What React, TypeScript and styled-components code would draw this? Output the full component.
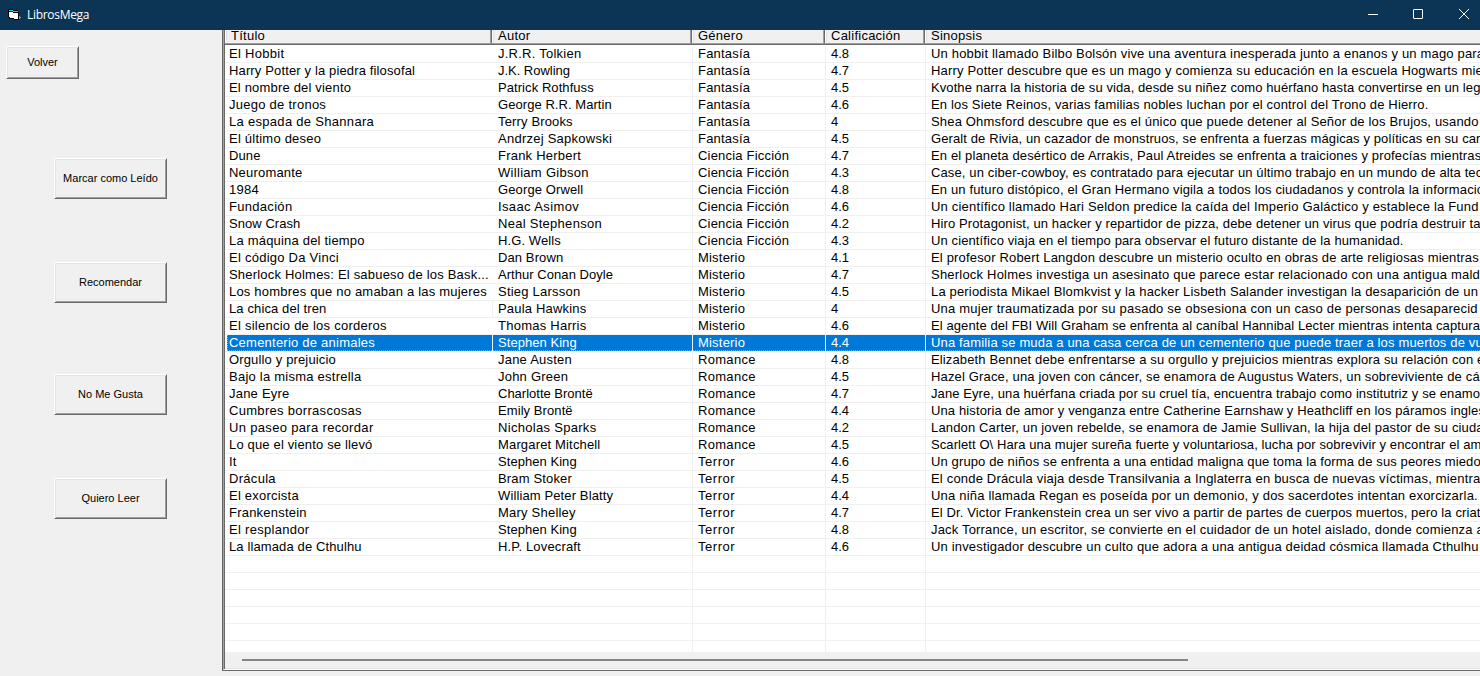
import React from "react";
import styled, { createGlobalStyle, css } from "styled-components";

const Global = createGlobalStyle`
  * { box-sizing: border-box; }
  body { margin: 0; background: #f0f0f0; overflow: hidden; }
`;

const Window = styled.div`
  display: flex;
  flex-direction: column;
  width: 1480px;
  height: 676px;
  overflow: hidden;
  background: #f0f0f0;
  color: #000;
  font-family: "Liberation Sans", Arial, sans-serif;
`;

const TitleBar = styled.header`
  display: flex;
  align-items: center;
  flex: 0 0 30px;
  padding-left: 7px;
  background: #0c3454;
  color: #fff;
`;

const AppTitle = styled.h1`
  flex: 1;
  margin: 0 0 0 5px;
  font: 400 12px/16px "Open Sans", "Noto Sans", sans-serif;
  letter-spacing: -0.3px;
`;

const WindowControls = styled.div`
  display: flex;
`;

const ControlButton = styled.button`
  display: flex;
  align-items: center;
  justify-content: center;
  width: 46px;
  height: 30px;
  padding: 0 0 2px;
  border: 0;
  background: none;
  &:first-child { width: 44px; }
  &:last-child { width: 45px; margin-right: -6px; }
`;

const Body = styled.main`
  display: flex;
  flex: 1;
  min-height: 0;
`;

const Sidebar = styled.nav`
  flex: 0 0 222px;
  padding: 16px 0 0 6px;
`;

const Actions = styled.div`
  display: flex;
  flex-direction: column;
  padding: 79px 0 0 48px;
`;

const PushButton = styled.button<{ $w: number; $h: number; $gap?: number }>`
  display: block;
  width: ${(p) => p.$w}px;
  height: ${(p) => p.$h}px;
  margin: 0 0 ${(p) => p.$gap ?? 0}px;
  padding: 0 0 1px;
  border: 1px solid;
  border-color: #fff #696969 #696969 #fff;
  background: #f0f0f0;
  box-shadow: inset 1px 1px #e3e3e3, inset -1px -1px #a0a0a0;
  color: #000;
  font: 11px/14px "Liberation Sans", Arial, sans-serif;
  white-space: nowrap;
`;

const ListFrame = styled.section`
  display: flex;
  flex-direction: column;
  flex: 1;
  min-width: 0;
  height: 641px;
  border-left: 1px solid #696969;
  border-bottom: 1px solid #696969;
  overflow: hidden;
`;

const ListView = styled.div`
  display: flex;
  flex-direction: column;
  flex: 1;
  min-height: 0;
  padding-left: 1px;
  border-left: 1px solid #a0a0a0;
  border-bottom: 1px solid #fff;
  background: linear-gradient(90deg, #696969 1px, #fff 1px);
`;

const columns = "267px 200px 133px 100px 555px";

const HeaderRow = styled.div`
  display: grid;
  grid-template-columns: ${columns};
  flex: 0 0 15px;
  background: #f0f0f0;
  border-bottom: 1px solid #696969;
`;

const HeaderCell = styled.div`
  height: 14px;
  padding-left: 6px;
  border-right: 1px solid #696969;
  border-bottom: 1px solid #a0a0a0;
  box-shadow: inset 1px 0 #fff, inset 2px 0 #e3e3e3, inset -1px 0 #a0a0a0;
  font-size: 13px;
  line-height: 12px;
  letter-spacing: 0.25px;
  white-space: nowrap;
  &:last-child {
    border-right: 0;
    box-shadow: inset 1px 0 #fff, inset 2px 0 #e3e3e3;
  }
`;

const Rows = styled.div`
  flex: 1;
  min-height: 0;
  padding-top: 1px;
  overflow: hidden;
`;

const Row = styled.div<{ $selected?: boolean }>`
  display: grid;
  grid-template-columns: ${columns};
  height: 17px;
  border-bottom: 1px solid #f0f0f0;
  ${(p) =>
    p.$selected &&
    css`
      color: #fff;
      background:
        repeating-linear-gradient(90deg, #ff8728 0 1px, #0078d7 1px 2px) 2px 15px / 100% 1px no-repeat,
        repeating-linear-gradient(180deg, #ff8728 0 1px, #0078d7 1px 2px) 2px 0 / 1px 16px no-repeat,
        linear-gradient(90deg, #fff 2px, #0078d7 2px);
    `}
`;

const Cell = styled.div<{ $line?: boolean; $first?: boolean }>`
  min-width: 0;
  padding-left: ${(p) => (p.$first ? 4 : 5)}px;
  border-left: ${(p) => (p.$first ? "0" : `1px solid ${p.$line ? "#f0f0f0" : "transparent"}`)};
  white-space: nowrap;
  font-size: 13px;
  line-height: 15px;
`;

const Label = styled.span<{ $tracking: number }>`
  letter-spacing: ${(p) => p.$tracking}px;
`;

const ScrollTrack = styled.div`
  flex: 0 0 17px;
  padding: 7px 0 0 17px;
  background: #f0f0f0;
  border-bottom: 1px solid #e3e3e3;
`;

const ScrollThumb = styled.div`
  width: 946px;
  height: 2px;
  background: #868686;
`;

interface Book {
  cells: [string, string, string, string, string];
  /* Letter spacing of the title, author and synopsis, in pixels. */
  tracking: [number, number, number];
}

const book = (cells: Book["cells"], tracking: Book["tracking"]): Book => ({ cells, tracking });

const books: Book[] = [
  book(["El Hobbit", "J.R.R. Tolkien", "Fantasía", "4.8", "Un hobbit llamado Bilbo Bolsón vive una aventura inesperada junto a enanos y un mago para"], [0.3, 0.25, 0.175]),
  book(["Harry Potter y la piedra filosofal", "J.K. Rowling", "Fantasía", "4.7", "Harry Potter descubre que es un mago y comienza su educación en la escuela Hogwarts mie"], [0.14, -0.03, 0.173]),
  book(["El nombre del viento", "Patrick Rothfuss", "Fantasía", "4.5", "Kvothe narra la historia de su vida, desde su niñez como huérfano hasta convertirse en un leg"], [0.18, 0.07, 0.088]),
  book(["Juego de tronos", "George R.R. Martin", "Fantasía", "4.6", "En los Siete Reinos, varias familias nobles luchan por el control del Trono de Hierro."], [0.26, 0.06, 0.155]),
  book(["La espada de Shannara", "Terry Brooks", "Fantasía", "4", "Shea Ohmsford descubre que es el único que puede detener al Señor de los Brujos, usando"], [0.3, 0.15, 0.172]),
  book(["El último deseo", "Andrzej Sapkowski", "Fantasía", "4.5", "Geralt de Rivia, un cazador de monstruos, se enfrenta a fuerzas mágicas y políticas en su car"], [0.22, 0.25, 0.105]),
  book(["Dune", "Frank Herbert", "Ciencia Ficción", "4.7", "En el planeta desértico de Arrakis, Paul Atreides se enfrenta a traiciones y profecías mientras"], [0.1, 0.22, 0.141]),
  book(["Neuromante", "William Gibson", "Ciencia Ficción", "4.3", "Case, un ciber-cowboy, es contratado para ejecutar un último trabajo en un mundo de alta tec"], [0.2, 0.3, 0.128]),
  book(["1984", "George Orwell", "Ciencia Ficción", "4.8", "En un futuro distópico, el Gran Hermano vigila a todos los ciudadanos y controla la informació"], [0.3, 0.12, 0.143]),
  book(["Fundación", "Isaac Asimov", "Ciencia Ficción", "4.6", "Un científico llamado Hari Seldon predice la caída del Imperio Galáctico y establece la Fund"], [0.3, 0.38, 0.195]),
  book(["Snow Crash", "Neal Stephenson", "Ciencia Ficción", "4.2", "Hiro Protagonist, un hacker y repartidor de pizza, debe detener un virus que podría destruir ta"], [0.05, 0.28, 0.111]),
  book(["La máquina del tiempo", "H.G. Wells", "Ciencia Ficción", "4.3", "Un científico viaja en el tiempo para observar el futuro distante de la humanidad."], [0.2, 0.1, 0.113]),
  book(["El código Da Vinci", "Dan Brown", "Misterio", "4.1", "El profesor Robert Langdon descubre un misterio oculto en obras de arte religiosas mientras"], [0.25, 0.1, 0.168]),
  book(["Sherlock Holmes: El sabueso de los Bask...", "Arthur Conan Doyle", "Misterio", "4.7", "Sherlock Holmes investiga un asesinato que parece estar relacionado con una antigua mald"], [0.2, 0.05, 0.21]),
  book(["Los hombres que no amaban a las mujeres", "Stieg Larsson", "Misterio", "4.5", "La periodista Mikael Blomkvist y la hacker Lisbeth Salander investigan la desaparición de un"], [0.2, 0.22, 0.165]),
  book(["La chica del tren", "Paula Hawkins", "Misterio", "4", "Una mujer traumatizada por su pasado se obsesiona con un caso de personas desaparecid"], [0.12, 0.18, 0.217]),
  book(["El silencio de los corderos", "Thomas Harris", "Misterio", "4.6", "El agente del FBI Will Graham se enfrenta al caníbal Hannibal Lecter mientras intenta captura"], [0.25, 0.25, 0.091]),
  book(["Cementerio de animales", "Stephen King", "Misterio", "4.4", "Una familia se muda a una casa cerca de un cementerio que puede traer a los muertos de vu"], [0.23, 0.05, 0.16]),
  book(["Orgullo y prejuicio", "Jane Austen", "Romance", "4.8", "Elizabeth Bennet debe enfrentarse a su orgullo y prejuicios mientras explora su relación con e"], [0.15, 0.22, 0.129]),
  book(["Bajo la misma estrella", "John Green", "Romance", "4.5", "Hazel Grace, una joven con cáncer, se enamora de Augustus Waters, un sobreviviente de cá"], [0.24, 0.22, 0.157]),
  book(["Jane Eyre", "Charlotte Brontë", "Romance", "4.7", "Jane Eyre, una huérfana criada por su cruel tía, encuentra trabajo como institutriz y se enamor"], [0.22, 0, 0.09]),
  book(["Cumbres borrascosas", "Emily Brontë", "Romance", "4.4", "Una historia de amor y venganza entre Catherine Earnshaw y Heathcliff en los páramos ingles"], [0.3, 0.08, 0.12]),
  book(["Un paseo para recordar", "Nicholas Sparks", "Romance", "4.2", "Landon Carter, un joven rebelde, se enamora de Jamie Sullivan, la hija del pastor de su ciuda"], [0.33, 0.3, 0.146]),
  book(["Lo que el viento se llevó", "Margaret Mitchell", "Romance", "4.5", "Scarlett O\\ Hara una mujer sureña fuerte y voluntariosa, lucha por sobrevivir y encontrar el am"], [0.16, 0.16, 0.082]),
  book(["It", "Stephen King", "Terror", "4.6", "Un grupo de niños se enfrenta a una entidad maligna que toma la forma de sus peores miedo"], [0.1, 0.05, 0.12]),
  book(["Drácula", "Bram Stoker", "Terror", "4.5", "El conde Drácula viaja desde Transilvania a Inglaterra en busca de nuevas víctimas, mientra"], [0.3, 0.15, 0.185]),
  book(["El exorcista", "William Peter Blatty", "Terror", "4.4", "Una niña llamada Regan es poseída por un demonio, y dos sacerdotes intentan exorcizarla."], [0.22, 0.12, 0.195]),
  book(["Frankenstein", "Mary Shelley", "Terror", "4.7", "El Dr. Victor Frankenstein crea un ser vivo a partir de partes de cuerpos muertos, pero la criat"], [0.22, 0.22, 0.12]),
  book(["El resplandor", "Stephen King", "Terror", "4.8", "Jack Torrance, un escritor, se convierte en el cuidador de un hotel aislado, donde comienza a"], [0.3, 0.05, 0.174]),
  book(["La llamada de Cthulhu", "H.P. Lovecraft", "Terror", "4.6", "Un investigador descubre un culto que adora a una antigua deidad cósmica llamada Cthulhu"], [0.12, 0.15, 0.17]),
];

const genreTracking: Record<string, number> = {
  Fantasía: 0.2,
  "Ciencia Ficción": 0.2,
  Misterio: 0.2,
  Romance: 0.3,
  Terror: 0.55,
};

const trackingOf = ({ cells, tracking }: Book, column: number) =>
  [tracking[0], tracking[1], genreTracking[cells[2]], 0, tracking[2]][column];

const selectedIndex = 17;
const repaintedIndex = 15;
const headings = ["Título", "Autor", "Género", "Calificación", "Sinopsis"];

export default function App() {
  return (
    <Window>
      <Global />
      <TitleBar>
        <svg width="15" height="14" viewBox="0 0 15 14" shapeRendering="crispEdges">
          <path d="M1 1h5v1h5v2h1v8H7v-1H2V9H1z" fill="#000" />
          <path d="M2 4h4v1h5v6H7v-1H3V9H2z" fill="#fff" />
          <path d="M2 2h4v1H2zM6 3h5v1H6z" fill="#00e5ee" />
          <path d="M12 8h1v1h1v1h-1v1h-1z" fill="#8b98a3" />
        </svg>
        <AppTitle>LibrosMega</AppTitle>
        <WindowControls>
          <ControlButton aria-label="Minimizar">
            <svg width="10" height="10"><path d="M0 5.5h10" stroke="#fff" /></svg>
          </ControlButton>
          <ControlButton aria-label="Maximizar">
            <svg width="10" height="10"><rect x=".5" y=".5" width="9" height="9" rx=".5" fill="none" stroke="#fff" /></svg>
          </ControlButton>
          <ControlButton aria-label="Cerrar">
            <svg width="10" height="10"><path d="M0 0l10 10M10 0L0 10" stroke="#fff" /></svg>
          </ControlButton>
        </WindowControls>
      </TitleBar>
      <Body>
        <Sidebar>
          <PushButton $w={73} $h={33}>Volver</PushButton>
          <Actions>
            <PushButton $w={113} $h={41} $gap={63}>Marcar como Leído</PushButton>
            <PushButton $w={113} $h={41} $gap={71}>Recomendar</PushButton>
            <PushButton $w={113} $h={41} $gap={63}>No Me Gusta</PushButton>
            <PushButton $w={113} $h={41}>Quiero Leer</PushButton>
          </Actions>
        </Sidebar>
        <ListFrame>
          <ListView>
            <HeaderRow>
              {headings.map((h) => <HeaderCell key={h}>{h}</HeaderCell>)}
            </HeaderRow>
            <Rows>
              {books.map((b, i) => (
                <Row key={b.cells[0]} $selected={i === selectedIndex}>
                  {b.cells.map((text, c) => (
                    <Cell key={c} $first={c === 0} $line={c > 1 || i === repaintedIndex || i === selectedIndex}>
                      <Label $tracking={trackingOf(b, c)}>{text}</Label>
                    </Cell>
                  ))}
                </Row>
              ))}
              {[0, 1, 2, 3, 4, 5].map((n) => (
                <Row key={n}>
                  {headings.map((h, c) => <Cell key={h} $first={c === 0} $line={c > 1} />)}
                </Row>
              ))}
            </Rows>
            <ScrollTrack><ScrollThumb /></ScrollTrack>
          </ListView>
        </ListFrame>
      </Body>
    </Window>
  );
}
